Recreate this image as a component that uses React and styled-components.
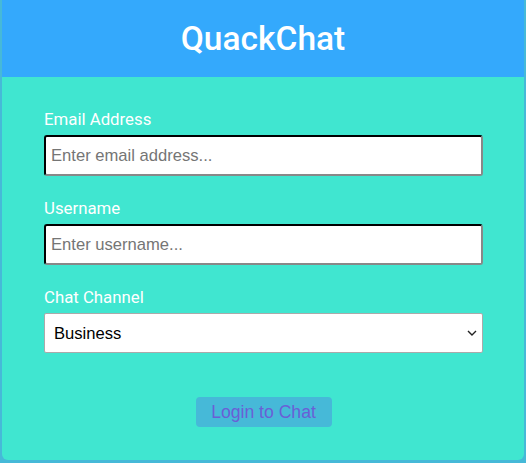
import React from "react";
import styled, { createGlobalStyle } from "styled-components";

const Global = createGlobalStyle`
  html, body { margin: 0; padding: 0; }
  body {
    background: #46b9d8;
    font-family: Roboto, "Liberation Sans", Arial, sans-serif;
  }
`;

const Card = styled.div`
  margin: 0 2px;
  height: 460px;
  background: #40e6d0;
  border-radius: 0 0 6px 6px;
  overflow: hidden;
  display: flex;
  flex-direction: column;
`;

const Header = styled.header`
  height: 77px;
  background: #34a9fc;
  display: flex;
  align-items: center;
  justify-content: center;
`;

const Title = styled.h1`
  margin: 0;
  color: #fff;
  font-family: Roboto, "Liberation Sans", sans-serif;
  font-weight: 500;
  font-size: 33.5px;
  line-height: 1;
`;

const Form = styled.form`
  display: flex;
  flex-direction: column;
  padding: 32px 41px 0 42px;
`;

const Field = styled.div`
  display: flex;
  flex-direction: column;
  gap: 6px;
  margin-bottom: 22px;
`;

const Label = styled.label`
  color: #fff;
  font-family: Roboto, "Liberation Sans", sans-serif;
  font-size: 16.8px;
  line-height: 20px;
`;

const TextInput = styled.input`
  box-sizing: border-box;
  height: 41px;
  width: 100%;
  padding: 0 5px;
  border: 2px inset #767676;
  border-top-color: #111;
  border-left-color: #111;
  border-right-color: #888;
  border-bottom-color: #888;
  border-radius: 3px;
  background: #fff;
  font-family: "Liberation Sans", Arial, sans-serif;
  font-size: 16.6px;
  color: #222;
  outline: none;
  &::placeholder { color: #757575; }
`;

const SelectWrap = styled.div`
  position: relative;
  display: flex;
`;

const Select = styled.select`
  box-sizing: border-box;
  height: 40px;
  width: 100%;
  padding: 0 28px 0 9px;
  border: 1px solid #aaa;
  border-radius: 2px;
  background: #fff;
  font-family: "Liberation Sans", Arial, sans-serif;
  font-size: 16.6px;
  color: #000;
  appearance: none;
  -webkit-appearance: none;
  outline: none;
`;

const Chevron = styled.svg`
  position: absolute;
  right: 6px;
  top: 50%;
  width: 10px;
  height: 6px;
  margin-top: -3px;
  pointer-events: none;
`;

const Actions = styled.div`
  display: flex;
  justify-content: center;
  margin-top: 22px;
`;

const Button = styled.button`
  box-sizing: border-box;
  width: 136px;
  height: 30px;
  border: none;
  border-radius: 4px;
  background: #46b9d8;
  color: #6a5fd6;
  font-family: "Liberation Sans", Arial, sans-serif;
  font-size: 17.6px;
  padding: 1px 0 0;
  cursor: pointer;
`;

export default function App() {
  return (
    <>
      <Global />
      <Card>
        <Header>
          <Title>QuackChat</Title>
        </Header>
        <Form onSubmit={(e) => e.preventDefault()}>
          <Field>
            <Label htmlFor="email">Email Address</Label>
            <TextInput id="email" type="email" placeholder="Enter email address..." />
          </Field>
          <Field>
            <Label htmlFor="username">Username</Label>
            <TextInput id="username" type="text" placeholder="Enter username..." />
          </Field>
          <Field>
            <Label htmlFor="channel">Chat Channel</Label>
            <SelectWrap>
              <Select id="channel" defaultValue="business">
                <option value="business">Business</option>
                <option value="general">General</option>
                <option value="random">Random</option>
              </Select>
              <Chevron viewBox="0 0 10 6" aria-hidden="true">
                <path d="M1 1 L5 5 L9 1" fill="none" stroke="#222" strokeWidth="1.4" />
              </Chevron>
            </SelectWrap>
          </Field>
          <Actions>
            <Button type="submit">Login to Chat</Button>
          </Actions>
        </Form>
      </Card>
    </>
  );
}
